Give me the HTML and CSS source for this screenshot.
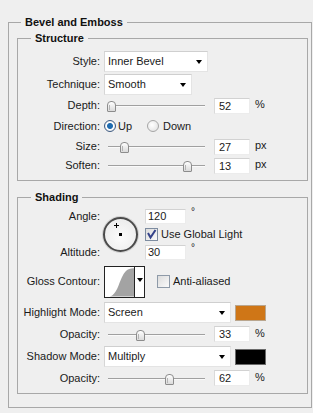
FILE: index.html
```html
<!DOCTYPE html>
<html lang="en">
<head>
  <meta charset="UTF-8">
  <title>Bevel and Emboss</title>
  <link rel="stylesheet" href="styles.css">
</head>
<body>
  <fieldset class="group">
    <legend>Bevel and Emboss</legend>

    <fieldset class="panel structure">
      <legend>Structure</legend>

      <div class="row row-style">
        <span class="label">Style:</span>
        <div class="select select-style">Inner Bevel<span class="arrow"></span></div>
      </div>

      <div class="row row-tech">
        <span class="label">Technique:</span>
        <div class="select select-tech">Smooth<span class="arrow"></span></div>
      </div>

      <div class="row row-slider">
        <span class="label">Depth:</span>
        <div class="slider"><span class="thumb" style="left:3px"></span></div>
        <div class="field">52</div>
        <span class="unit">%</span>
      </div>

      <div class="row row-dir">
        <span class="label">Direction:</span>
        <span class="radio checked"></span><span class="opt">Up</span>
        <span class="radio"></span><span class="opt">Down</span>
      </div>

      <div class="row row-slider">
        <span class="label">Size:</span>
        <div class="slider"><span class="thumb" style="left:16px"></span></div>
        <div class="field">27</div>
        <span class="unit">px</span>
      </div>

      <div class="row row-slider">
        <span class="label">Soften:</span>
        <div class="slider"><span class="thumb" style="left:79px"></span></div>
        <div class="field">13</div>
        <span class="unit">px</span>
      </div>
    </fieldset>

    <fieldset class="panel shading">
      <legend>Shading</legend>

      <div class="angle-block">
        <div class="angle-labels">
          <span class="label">Angle:</span>
          <span class="label">Altitude:</span>
        </div>
        <div class="dial">
          <span class="cross"></span>
          <span class="dot"></span>
        </div>
        <div class="angle-fields">
          <div class="deg-row"><div class="field small">120</div><span class="deg">°</span></div>
          <div class="check-row"><span class="check on"><svg width="11" height="11" viewBox="0 0 11 11"><path d="M2 4 L4.5 8.5 L9.5 1" fill="none" stroke="#34428a" stroke-width="2"/></svg></span><span class="opt">Use Global Light</span></div>
          <div class="deg-row"><div class="field small">30</div><span class="deg">°</span></div>
        </div>
      </div>

      <div class="row row-gloss">
        <span class="label">Gloss Contour:</span>
        <div class="contour">
          <svg width="30" height="30" viewBox="0 0 30 30"><path d="M5 30 C12 28 14 17 17 11 C20 5 22 1 30 1 L30 30 Z" fill="#a3a3a3"/></svg>
          <span class="contour-btn"><span class="arrow"></span></span>
        </div>
        <span class="check"></span><span class="opt">Anti-aliased</span>
      </div>

      <div class="row row-mode">
        <span class="label">Highlight Mode:</span>
        <div class="select select-mode">Screen<span class="arrow"></span></div>
        <span class="swatch orange"></span>
      </div>

      <div class="row row-opacity">
        <span class="label">Opacity:</span>
        <div class="slider"><span class="thumb" style="left:32px"></span></div>
        <div class="field">33</div>
        <span class="unit">%</span>
      </div>

      <div class="row row-mode">
        <span class="label">Shadow Mode:</span>
        <div class="select select-mode">Multiply<span class="arrow"></span></div>
        <span class="swatch black"></span>
      </div>

      <div class="row row-opacity">
        <span class="label">Opacity:</span>
        <div class="slider"><span class="thumb" style="left:61px"></span></div>
        <div class="field">62</div>
        <span class="unit">%</span>
      </div>
    </fieldset>
  </fieldset>
</body>
</html>
```

FILE: styles.css
```css
body {
    margin: 0;
    padding: 15px 1px 0 8px;
    background-color: #efefef;
    font-family: "Liberation Sans", Arial, sans-serif;
    font-size: 11px;
    color: #1a1a1a;
}

fieldset {
    margin: 0;
    border: 1px solid #a8a8a8;
    min-width: 0;
}

legend {
    font-weight: bold;
    line-height: 14px;
    padding: 0 4px;
    color: #111;
}

.group {
    padding: 2px 3px 13px 8px;
}

.group > legend {
    margin-left: 4px;
}

.panel {
    padding: 0;
}

.panel > legend {
    margin-left: 13px;
}

.structure {
    padding: 5px 0 6px 0;
    display: flex;
    flex-direction: column;
    gap: 2px;
}

.shading {
    margin-top: 9px;
    padding: 5px 0 7px 0;
}

.row {
    display: flex;
    align-items: center;
}

.label {
    width: 82px;
    text-align: right;
    line-height: 13px;
    flex-shrink: 0;
}

.row .label {
    margin-right: 4px;
}

.row-style { height: 22px; }
.row-tech { height: 21px; }
.row-slider { height: 17px; }
.row-dir { height: 20px; }

/* selects */
.select {
    position: relative;
    height: 21px;
    box-sizing: border-box;
    background-color: #fff;
    border: 1px solid #e4e4e4;
    border-top-color: #cfcfcf;
    border-left-color: #d6d6d6;
    padding-left: 3px;
    line-height: 19px;
}

.select-style { width: 104px; }
.select-tech { width: 88px; }
.select-mode { width: 127px; }

.arrow {
    position: absolute;
    right: 5px;
    top: 8px;
    width: 0;
    height: 0;
    border-left: 3.5px solid transparent;
    border-right: 3.5px solid transparent;
    border-top: 4px solid #000;
}

/* sliders */
.slider {
    position: relative;
    width: 101px;
    height: 17px;
    margin-right: 9px;
}

.slider::before {
    content: "";
    position: absolute;
    left: 4px;
    right: 0;
    top: 8px;
    border-top: 1px solid #a0a0a0;
    border-bottom: 1px solid #fafafa;
}

.thumb {
    position: absolute;
    top: 4px;
    width: 7px;
    height: 9px;
    border: 1px solid #8c8c8c;
    border-radius: 4px 4px 1px 1px;
    background: linear-gradient(#ffffff, #dadada);
}

.thumb::after {
    content: "";
    position: absolute;
    left: 1px;
    top: 3px;
    height: 5px;
    border-left: 1px solid #b4b4b4;
}

.field {
    width: 36px;
    height: 16px;
    box-sizing: border-box;
    background-color: #fff;
    border: 1px solid #ececec;
    border-top-color: #d2d2d2;
    border-left-color: #dadada;
    padding-left: 4px;
    line-height: 14px;
}

.field.small {
    width: 41px;
    height: 15px;
    line-height: 13px;
    padding-left: 2px;
}

.unit {
    margin-left: 5px;
    margin-top: -3px;
}

/* radios and checks */
.radio {
    width: 12px;
    height: 12px;
    box-sizing: border-box;
    border-radius: 50%;
    border: 1px solid #a6a6a6;
    background: radial-gradient(circle at 40% 40%, #ffffff, #dedede);
    margin-right: 2px;
}

.radio.checked {
    border-color: #3d5a80;
    background: radial-gradient(circle, #1e6bb0 0, #1e6bb0 2.5px, #fff 3.5px, #d8dde4 6px);
}

.opt {
    line-height: 13px;
}

.row-dir .radio:not(.checked) {
    margin-left: 15px;
    margin-right: 4px;
}

.check {
    display: flex;
    align-items: center;
    justify-content: center;
    width: 13px;
    height: 13px;
    box-sizing: border-box;
    border: 1px solid #8e9aa8;
    background: linear-gradient(135deg, #dcdcdc, #fafafa);
    flex-shrink: 0;
}

/* angle */
.angle-block {
    display: flex;
    height: 51px;
}

.angle-labels {
    display: flex;
    flex-direction: column;
    justify-content: space-between;
    padding: 0 0 1px 0;
}

.angle-labels .label {
    margin-top: 1px;
}

.dial {
    position: relative;
    width: 35px;
    height: 35px;
    box-sizing: border-box;
    margin: 8px 0 0 3px;
    border: 2px solid #4a4a4a;
    border-radius: 50%;
    background: radial-gradient(circle at 50% 60%, #fbfbfb, #e8e8e8);
    box-shadow: 0 0 0 1px #d0d0d0;
}

.dot {
    position: absolute;
    left: 14px;
    top: 14px;
    width: 3px;
    height: 3px;
    background-color: #000;
}

.cross {
    position: absolute;
    left: 9px;
    top: 4px;
    width: 5px;
    height: 5px;
    background:
        linear-gradient(#000, #000) center / 5px 1px no-repeat,
        linear-gradient(#000, #000) center / 1px 5px no-repeat;
}

.angle-fields {
    display: flex;
    flex-direction: column;
    gap: 2px;
    margin-left: 7px;
}

.deg-row {
    display: flex;
    height: 15px;
}

.deg {
    margin-left: 5px;
    margin-top: -3px;
    font-size: 10px;
}

.check-row {
    display: flex;
    align-items: center;
    height: 17px;
}

.check-row .check {
    width: 13px;
    height: 13px;
    margin-right: 3px;
    border-color: #7d8ca0;
}

/* gloss contour */
.row-gloss {
    margin-top: 6px;
    height: 31px;
}

.contour {
    display: flex;
    width: 41px;
    height: 32px;
    box-sizing: border-box;
    border: 1px solid #222;
    background-color: #fff;
    margin-right: 12px;
}

.contour-btn {
    position: relative;
    width: 9px;
    border-left: 1px solid #222;
}

.contour-btn .arrow {
    right: 1px;
    top: 11px;
}

.row-gloss .opt {
    margin-left: 3px;
}

/* modes */
.row-mode {
    height: 21px;
    margin-top: 5px;
}

.row-mode + .row-opacity {
    margin-top: 3px;
}

.row-opacity + .row-mode {
    margin-top: 4px;
}

.row-opacity {
    height: 16px;
}

.swatch {
    width: 31px;
    height: 16px;
    box-sizing: border-box;
    margin-left: 4px;
    border: 1px solid #9a9a9a;
}

.swatch.orange { background-color: #cf7617; border-color: #b9a68f; }
.swatch.black { background-color: #000; border-color: #6a6a6a; }
```
